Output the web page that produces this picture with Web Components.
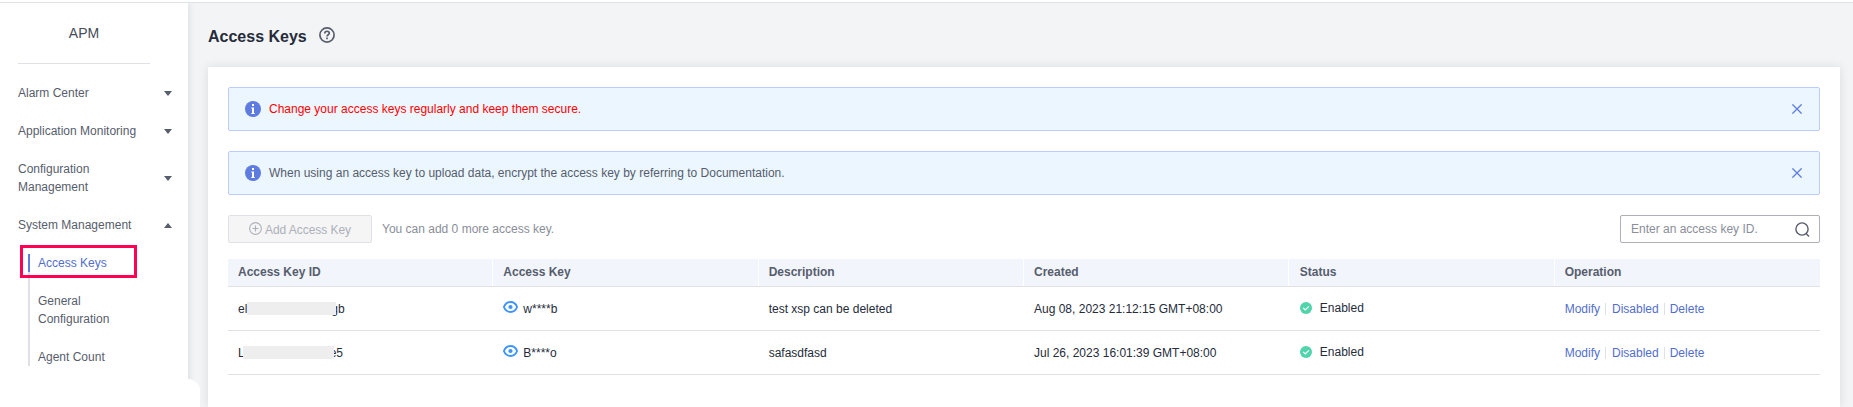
<!DOCTYPE html>
<html lang="en">
<head>
<meta charset="utf-8">
<title>APM - Access Keys</title>
<style>
html,body{margin:0;height:100%;overflow:hidden}
body{font:12px/18px "Liberation Sans",Arial,sans-serif;color:#252b3a;background:#f3f4f6}
</style>
</head>
<body>
<apm-app></apm-app>
<script>
const define = (name, html) => customElements.define(name, class extends HTMLElement {
  constructor() {
    super();
    this.attachShadow({mode: 'open'});
  }
  connectedCallback() {
    this.shadowRoot.innerHTML = html;
  }
});

define('nav-item', `<style>
:host{display:flex;align-items:center;justify-content:space-between;padding-right:16px;color:#575d6c}
.t{width:130px}
svg{display:block;width:8px;height:5px}
:host([open]) svg{transform:scaleY(-1)}
</style><span class="t"><slot></slot></span><svg viewBox="0 0 8 5"><path d="M0 0h8L4 5z" fill="#575d6c"/></svg>`);

define('nav-sub', `<style>
:host{display:block;box-sizing:border-box;border-left:2px solid #dfe1e6;padding-left:8px;padding-bottom:20px;color:#575d6c}
:host([last]){padding-bottom:0}
:host([active]){color:#526ecc;position:relative}
:host([active])::before{content:"";position:absolute;left:-2px;top:0;width:2px;height:18px;background:#5e7ce0}
:host([active])::after{content:"";position:absolute;left:-10px;top:-9px;width:111px;height:27px;border:3px solid #ff0055}
</style><slot></slot>`);

define('apm-sidebar', `<style>
:host{display:block;box-sizing:border-box;width:188px;background:#fff;padding-left:18px;box-shadow:0 0 8px rgba(0,0,0,.12);position:relative;z-index:1}
h2{margin:0;width:132px;height:61px;box-sizing:border-box;padding-top:20px;border-bottom:1px solid #dfe1e6;font-size:14px;line-height:20px;font-weight:400;text-align:center;color:#464c59}
nav{display:flex;flex-direction:column;gap:20px;padding-top:20px}
.sub{padding-left:10px}
.corner{position:absolute;left:0;bottom:0;width:200px;height:28px;background:#fff;border-radius:0 12px 0 0}
</style>
<h2>APM</h2>
<nav>
<nav-item>Alarm Center</nav-item>
<nav-item>Application Monitoring</nav-item>
<nav-item>Configuration<br>Management</nav-item>
<nav-item open>System Management</nav-item>
<div class="sub"><nav-sub active>Access Keys</nav-sub><nav-sub>General<br>Configuration</nav-sub><nav-sub last>Agent Count</nav-sub></div>
</nav><div class="corner"></div>`);

define('info-alert', `<style>
:host{display:flex;align-items:center;box-sizing:border-box;height:44px;border:1px solid #beccfa;border-radius:2px;background:#ebf6ff;padding:0 17px 0 16px;margin-bottom:20px;color:#575d6c}
:host([warn]){color:#f00}
.i{width:16px;height:16px;margin-right:8px;flex:none}
.t{flex:1;white-space:nowrap}
.x{width:10px;height:10px}
</style><svg class="i" viewBox="0 0 16 16"><circle cx="8" cy="8" r="8" fill="#5e7ce0"/><path d="M7 3h2v2H7zM6.3 6.4H9V12h.7v1H6.3v-1H7V7.4h-.7z" fill="#fff"/></svg><span class="t"><slot></slot></span><svg class="x" viewBox="0 0 10 10"><path d="M.4.4l9.2 9.2M9.6.4L.4 9.6" stroke="#5e7ce0" stroke-width="1.3"/></svg>`);

define('add-button', `<style>
:host{display:flex;align-items:center;box-sizing:border-box;width:144px;height:28px;border:1px solid #dfe1e6;border-radius:2px;background:#f5f5f6;color:#adb0b8;padding:1px 0 0 20px}
svg{width:13px;height:13px;margin:-2px 3px 0 0}
span{white-space:nowrap;letter-spacing:-.05px}
</style><svg viewBox="0 0 13 13" fill="none" stroke="#adb0b8" stroke-width="1.1"><circle cx="6.5" cy="6.5" r="5.9"/><path d="M6.5 3.5v6M3.5 6.5h6"/></svg><span><slot></slot></span>`);

define('search-box', `<style>
:host{display:flex;align-items:center;justify-content:space-between;box-sizing:border-box;width:200px;height:28px;border:1px solid #adb0b8;border-radius:2px;background:#fff;color:#8a8e99;padding:0 9px 0 10px}
svg{width:15px;height:15px}
</style><span><slot></slot></span><svg viewBox="0 0 15 15" fill="none" stroke="#575d6c" stroke-width="1.4"><circle cx="7" cy="7" r="6.1"/><path d="M10.8 11.2l3.2 3.2"/></svg>`);

define('masked-id', `<style>
:host{display:flex;white-space:pre}
i{position:relative;width:var(--w);height:13px;margin:2px var(--r) 0 var(--m);background:#eee}
</style><slot name="a"></slot><i></i><slot name="b"></slot>`);

define('secret-key', `<style>
:host{display:flex}
svg{width:15px;height:12px;margin:1px 5px 0 0}
</style><svg viewBox="0 0 15 12" fill="none" stroke="#3d94ff"><path d="M.9 6C3.5-.6 11.5-.6 14.1 6 11.5 12.6 3.5 12.6.9 6z" stroke-width="1.9"/><circle cx="7.5" cy="6" r="2.1" fill="#3d94ff" stroke="none"/></svg><slot></slot>`);

define('status-tag', `<style>
:host{display:flex;align-items:center;margin-top:-2px}
svg{width:12px;height:12px;margin-right:8px}
</style><svg viewBox="0 0 12 12"><circle cx="6" cy="6" r="6" fill="#50d4ab"/><path d="M3.2 5.9l2 2L8.9 4.4" fill="none" stroke="#fff" stroke-width="1.3"/></svg><slot></slot>`);

define('row-actions', `<style>
:host{display:flex;align-items:center;color:#526ecc}
i{width:1px;height:12px;background:#dfe1e6;margin:0 5px}
i:first-of-type{margin-right:6px}
i:last-of-type{margin-right:5px}
</style><span>Modify</span><i></i><span>Disabled</span><i></i><span>Delete</span>`);

define('key-row', `<style>
:host{display:grid;grid-template-columns:repeat(6,1fr);box-sizing:border-box;height:44px;border-bottom:1px solid #dfe1e6}
:host([head]){height:28px;background:#f2f5fc;font-weight:700;color:#575d6c}
::slotted(*){display:flex;align-items:center;padding-left:10px;box-sizing:border-box}
:host([head]) ::slotted(*){border-right:1px solid #fff;padding-bottom:1px}
:host([head]) ::slotted(:last-child){border-right:0}
::slotted(:nth-child(5)){padding-left:10.5px}
</style><slot></slot>`);

define('apm-content', `<style>
:host{display:flex;flex-direction:column;flex:1;min-width:0;padding:0 13px 0 20px}
header{display:flex;align-items:center;height:64px}
h1{margin:0 12px 0 0;font-size:16px;line-height:24px;font-weight:700;padding-top:3px}
header svg{width:16px;height:16px}
main{flex:1;background:#fff;box-shadow:0 0 10px rgba(0,0,0,.1);padding:20px 20px 0}
.bar{display:flex;align-items:center;height:28px;margin-bottom:16px;color:#8a8e99}
.note{margin-left:10px;flex:1}
</style>
<header><h1>Access Keys</h1><svg viewBox="0 0 16 16" fill="none" stroke="#575d6c" stroke-width="1.7"><circle cx="8" cy="8" r="7.1"/><path d="M5.8 6.5C5.8 3.5 10.3 3.6 10.3 6.3 10.3 7.8 8 7.7 8 9.6"/><path d="M8 10.6v1.6"/></svg></header>
<main>
<info-alert warn>Change your access keys regularly and keep them secure.</info-alert>
<info-alert>When using an access key to upload data, encrypt the access key by referring to Documentation.</info-alert>
<div class="bar"><add-button>Add Access Key</add-button><span class="note">You can add 0 more access key.</span><search-box>Enter an access key ID.</search-box></div>
<key-row head><div>Access Key ID</div><div>Access Key</div><div>Description</div><div>Created</div><div>Status</div><div>Operation</div></key-row>
<key-row><div><masked-id style="--w:89px;--m:0px;--r:-5px"><span slot="a">el</span><span slot="b">gb</span></masked-id></div><div><secret-key>w****b</secret-key></div><div>test xsp can be deleted</div><div>Aug 08, 2023 21:12:15 GMT+08:00</div><div><status-tag>Enabled</status-tag></div><div><row-actions></row-actions></div></key-row>
<key-row><div><masked-id style="--w:91px;--m:-2px;--r:-4px"><span slot="a">L</span><span slot="b">e5</span></masked-id></div><div><secret-key>B****o</secret-key></div><div>safasdfasd</div><div>Jul 26, 2023 16:01:39 GMT+08:00</div><div><status-tag>Enabled</status-tag></div><div><row-actions></row-actions></div></key-row>
</main>`);

define('apm-app', `<style>
:host{display:flex;flex-direction:column;height:407px;overflow:hidden}
.top{height:2px;flex:none;background:#fff;border-bottom:1px solid #dfe1e6;position:relative;z-index:2}
.body{display:flex;flex:1;min-height:0}
</style><div class="top"></div><div class="body"><apm-sidebar></apm-sidebar><apm-content></apm-content></div>`);
</script>
</body>
</html>
